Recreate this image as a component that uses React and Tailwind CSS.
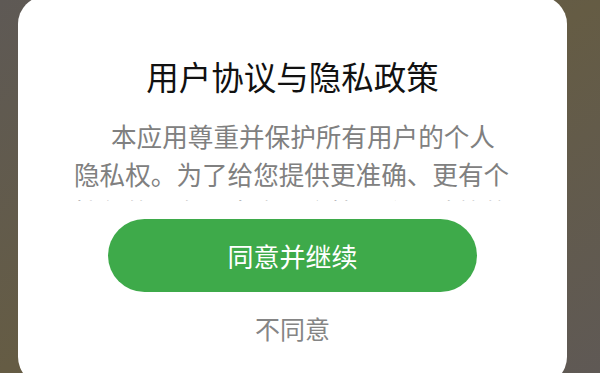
export default function App() {
  return (
    <div
      className="h-[373px] w-[600px] overflow-hidden pl-[18px] bg-linear-to-br from-[#5e5955] via-[#655c44] to-[#5f5955]"
      style={{ fontFamily: '"Noto Sans CJK SC", "Noto Sans", sans-serif' }}
    >
      <div className="-mt-[4px] h-[389px] w-[549px] rounded-[28px] bg-white px-[56px] pt-[60px] flex flex-col">
        <h1 className="text-center text-[32.5px] leading-[40px] font-normal text-[#111111]">
          用户协议与隐私政策
        </h1>
        <div className="mt-[21px] h-[84px] shrink-0 overflow-hidden">
          <p className="indent-[37px] text-[25.6px] leading-[38px] text-[#808080]">
            本应用尊重并保护所有用户的个人隐私权。为了给您提供更准确、更有个性化的服务，本应用会按照隐私政策的规定使用和披露您的个人信息。
          </p>
        </div>
        <button className="mx-auto mt-[18px] flex h-[73px] w-[369px] shrink-0 items-center justify-center rounded-full bg-[#3eaa4a] text-[26px] text-white">
          同意并继续
        </button>
        <div className="mt-[18px] text-center text-[25px] leading-[36px] text-[#858585]">
          不同意
        </div>
      </div>
    </div>
  );
}
